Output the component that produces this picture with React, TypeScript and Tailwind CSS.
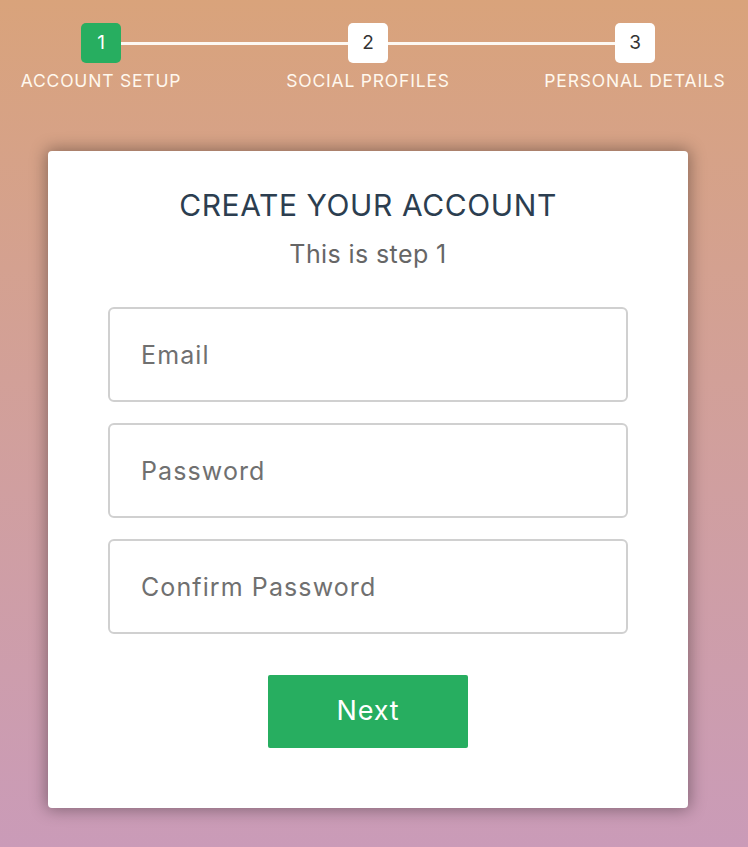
const steps = ['Account Setup', 'Social Profiles', 'Personal Details'];

function Progress({ current }: { current: number }) {
  return (
    <div className="relative ml-[-32.5px] grid w-[801px] grid-cols-3 pt-[23px]">
      {/* connector line behind the squares */}
      <div className="absolute left-[133.5px] top-[42px] h-[3px] w-[534px] bg-[#fdf8f2]" />
      {steps.map((label, i) => (
        <div key={label} className="relative flex flex-col items-center">
          <div
            className={
              i + 1 === current
                ? 'flex h-10 w-10 items-center justify-center rounded-[5px] bg-[#27ae60] text-[19px] text-white'
                : 'flex h-10 w-10 items-center justify-center rounded-[5px] bg-white text-[19px] text-[#333]'
            }
          >
            {i + 1}
          </div>
          <div className="mt-[8px] text-[17.5px] leading-[20px] tracking-[0.8px] uppercase text-[#fff8ee]">
            {label}
          </div>
        </div>
      ))}
    </div>
  );
}

export default function App() {
  return (
    <div
      className="min-h-screen overflow-hidden bg-linear-to-b from-[#d9a37b] to-[#ca9bb8]"
      style={{ fontFamily: 'Inter, "Open Sans", sans-serif' }}
    >
      <Progress current={1} />
      <div className="ml-[48px] mt-[60px] flex w-[640px] flex-col items-center rounded-[4px] bg-white px-[60px] pb-[60px] pt-[36px] shadow-[0_0_16px_2px_rgba(0,0,0,0.35)]">
        <h2 className="text-[30px] leading-[36px] tracking-[0.6px] uppercase text-[#2c3e50]">Create your account</h2>
        <h3 className="mt-[16px] text-[25px] leading-[30px] tracking-[0.4px] text-[#666]">This is step 1</h3>
        <div className="mt-[38px] flex w-full flex-col gap-[21px]">
          {['Email', 'Password', 'Confirm Password'].map((p) => (
            <input
              key={p}
              type={p === 'Email' ? 'email' : 'password'}
              placeholder={p}
              className="h-[95px] w-full rounded-[6px] border-2 border-[#d0d0d0] px-[31px] text-[25px] tracking-[1.1px] text-[#2c3e50] outline-none placeholder:text-[#707070]"
            />
          ))}
        </div>
        <button className="mt-[41px] h-[73px] w-[200px] rounded-[2px] bg-[#27ae60] text-[27px] tracking-[0.8px] text-white">
          Next
        </button>
      </div>
    </div>
  );
}
